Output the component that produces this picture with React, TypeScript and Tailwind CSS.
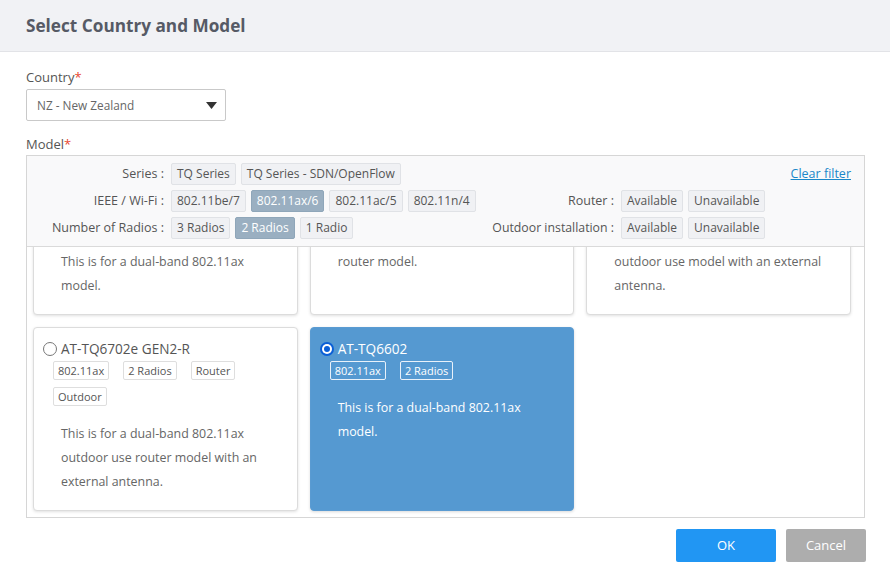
import React, { useLayoutEffect, useRef } from "react";

type CardProps = {
  title: string;
  tags: string[];
  desc: string;
  selected?: boolean;
  descMt: string;
};

function Radio({ checked }: { checked?: boolean }) {
  if (checked) {
    return (
      <span className="w-[14px] h-[14px] rounded-full bg-[#0b5fd6] flex items-center justify-center shrink-0">
        <span className="w-[10px] h-[10px] rounded-full bg-white flex items-center justify-center">
          <span className="w-[6px] h-[6px] rounded-full bg-[#0b5fd6]" />
        </span>
      </span>
    );
  }
  return <span className="w-[14px] h-[14px] rounded-full border border-[#777] bg-white shrink-0" />;
}

function Card({ title, tags, desc, selected, descMt }: CardProps) {
  return (
    <div
      className={
        selected
          ? "rounded-[4px] border border-[#5a9bd2] bg-[#5599d1] shadow-[0_1px_3px_rgba(0,0,0,0.15)] pt-[11px] pb-[16px]"
          : "rounded-[4px] border border-[#dcdcdc] bg-white shadow-[0_1px_3px_rgba(0,0,0,0.12)] pt-[11px] pb-[16px]"
      }
    >
      <div className="flex items-center gap-[4px] pl-[9px] h-[20px]">
        <Radio checked={selected} />
        <span className={selected ? "text-[13.6px] text-white leading-[20px]" : "text-[13.6px] text-[#555] leading-[20px]"}>
          {title}
        </span>
      </div>
      <div className="flex flex-wrap gap-x-[14px] gap-y-[7px] pl-[19px] pr-[28px] mt-[2px]">
        {tags.map((t) => (
          <span
            key={t}
            className={
              selected
                ? "h-[19px] px-[4px] border border-[#e8f1fa] rounded-[2px] text-[11px] leading-[17px] text-white"
                : "h-[19px] px-[4px] border border-[#dedede] rounded-[2px] text-[11px] leading-[17px] text-[#555]"
            }
          >
            {t}
          </span>
        ))}
      </div>
      <p
        className={
          descMt +
          (selected
            ? " pl-[27px] pr-[18px] text-[12.4px] leading-[24px] text-white"
            : " pl-[27px] pr-[18px] text-[12.4px] leading-[24px] text-[#666]")
        }
      >
        {desc}
      </p>
    </div>
  );
}

function Chip({ label, active }: { label: string; active?: boolean }) {
  return (
    <span
      className={
        active
          ? "h-[22px] px-[5px] border border-[#8fa6b9] bg-[#9aafc1] rounded-[2px] text-[12px] leading-[20px] text-white"
          : "h-[22px] px-[5px] border border-[#e0e2e6] bg-[#f0f1f4] rounded-[2px] text-[12px] leading-[20px] text-[#555]"
      }
    >
      {label}
    </span>
  );
}

export default function App() {
  const scrollRef = useRef<HTMLDivElement>(null);
  useLayoutEffect(() => {
    if (scrollRef.current) scrollRef.current.scrollTop = 10000;
  }, []);

  return (
    <div className="w-[890px] h-[582px] bg-white flex flex-col font-['Open_Sans',sans-serif] text-[#555]">
      <div className="h-[52px] shrink-0 bg-[#f1f2f5] border-b border-[#e2e3e7] px-[26px] flex items-center">
        <h1 className="text-[17.2px] font-bold text-[#565a65] leading-none">Select Country and Model</h1>
      </div>

      <div className="flex flex-col pl-[26px] pr-[25px] pt-[16px]">
        <div className="text-[13px] leading-[18px] text-[#555]">
          Country<span className="text-[#e8472f]">*</span>
        </div>
        <div className="mt-[3px] w-[200px] h-[32px] border border-[#c9c9c9] rounded-[2px] flex items-center justify-between pl-[10px] pr-[8px]">
          <span className="text-[11.8px] text-[#666] pt-[2px]">NZ - New Zealand</span>
          <svg width="11" height="7" viewBox="0 0 11 7">
            <path d="M0 0 L11 0 L5.5 7 Z" fill="#333" />
          </svg>
        </div>

        <div className="mt-[14px] text-[13px] leading-[18px] text-[#555]">
          Model<span className="text-[#e8472f]">*</span>
        </div>

        <div className="mt-[2px] h-[363px] border border-[#d6d6d6] flex flex-col">
          <div className="shrink-0 bg-[#f9f9fa] border-b border-[#dadada] pt-[7px] pb-[7px] flex flex-col gap-[5px]">
            <div className="flex items-center h-[22px]">
              <div className="w-[144px] shrink-0 text-right pr-[7px] text-[12.5px] text-[#555]">Series :</div>
              <div className="flex gap-[5px]">
                <Chip label="TQ Series" />
                <Chip label="TQ Series - SDN/OpenFlow" />
              </div>
              <a className="ml-auto mr-[13px] text-[12.5px] text-[#1a87c9] underline">Clear filter</a>
            </div>
            <div className="flex items-center h-[22px]">
              <div className="w-[144px] shrink-0 text-right pr-[7px] text-[12.5px] text-[#555]">IEEE / Wi-Fi :</div>
              <div className="w-[309px] shrink-0 flex gap-[5px]">
                <Chip label="802.11be/7" />
                <Chip label="802.11ax/6" active />
                <Chip label="802.11ac/5" />
                <Chip label="802.11n/4" />
              </div>
              <div className="w-[141px] shrink-0 text-right pr-[7px] text-[12.5px] text-[#555]">Router :</div>
              <div className="flex gap-[5px]">
                <Chip label="Available" />
                <Chip label="Unavailable" />
              </div>
            </div>
            <div className="flex items-center h-[22px]">
              <div className="w-[144px] shrink-0 text-right pr-[7px] text-[12.5px] text-[#555]">Number of Radios :</div>
              <div className="w-[309px] shrink-0 flex gap-[5px]">
                <Chip label="3 Radios" />
                <Chip label="2 Radios" active />
                <Chip label="1 Radio" />
              </div>
              <div className="w-[141px] shrink-0 text-right pr-[7px] text-[12.3px] text-[#555] whitespace-nowrap">Outdoor installation :</div>
              <div className="flex gap-[5px]">
                <Chip label="Available" />
                <Chip label="Unavailable" />
              </div>
            </div>
          </div>

          <div ref={scrollRef} className="flex-1 min-h-0 overflow-hidden">
            <div className="grid grid-cols-3 gap-[12px] pl-[6px] pr-[13px] pt-[7px] pb-[6px]">
              <Card
                title="AT-TQ6702 GEN2"
                tags={["802.11ax", "2 Radios"]}
                desc="This is for a dual-band 802.11ax model."
                descMt="mt-[65px]"
              />
              <Card
                title="AT-TQ6602 GEN2-R"
                tags={["802.11ax", "2 Radios", "Router"]}
                desc="This is for a dual-band 802.11ax router model."
                descMt="mt-[41px]"
              />
              <Card
                title="AT-TQ6702e GEN2"
                tags={["802.11ax", "2 Radios", "Outdoor"]}
                desc="This is for a dual-band 802.11ax outdoor use model with an external antenna."
                descMt="mt-[41px]"
              />
              <Card
                title="AT-TQ6702e GEN2-R"
                tags={["802.11ax", "2 Radios", "Router", "Outdoor"]}
                desc="This is for a dual-band 802.11ax outdoor use router model with an external antenna."
                descMt="mt-[16px]"
              />
              <Card
                title="AT-TQ6602"
                tags={["802.11ax", "2 Radios"]}
                desc="This is for a dual-band 802.11ax model."
                selected
                descMt="mt-[16px]"
              />
            </div>
          </div>
        </div>

        <div className="mt-[11px] flex justify-end gap-[10px] mr-[-1px]">
          <button className="w-[100px] h-[33px] bg-[#2196f3] rounded-[2px] text-[13px] text-white">OK</button>
          <button className="w-[80px] h-[33px] bg-[#adadad] rounded-[2px] text-[13px] text-white">Cancel</button>
        </div>
      </div>
    </div>
  );
}
